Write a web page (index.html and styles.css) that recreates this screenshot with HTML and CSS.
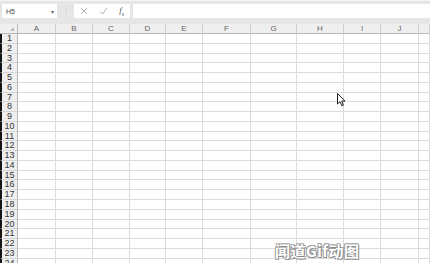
FILE: index.html
```html
<!DOCTYPE html>
<html lang="zh">
<head>
  <meta charset="UTF-8">
  <title>工作表</title>
  <link rel="stylesheet" href="styles.css">
</head>
<body>
  <div class="app">
    <!-- 编辑栏 -->
    <div class="formula-bar">
      <div class="name-box">
        <span>H5</span>
        <span class="caret">▾</span>
      </div>
      <div class="grip">⋮</div>
      <div class="fx-buttons">
        <svg width="8" height="8" viewBox="0 0 8 8"><path d="M1 1L7 7M7 1L1 7" stroke="#b0b0b0" stroke-width="1" fill="none"/></svg>
        <svg width="9" height="8" viewBox="0 0 9 8"><path d="M1 4.5L3.5 7L8 1" stroke="#b0b0b0" stroke-width="1" fill="none"/></svg>
        <span class="fx"><i>f</i><sub>x</sub></span>
      </div>
      <div class="formula-input"></div>
    </div>

    <!-- 表格 -->
    <div class="sheet" id="sheet"></div>

    <svg class="cursor" width="9" height="14" viewBox="0 0 9 14">
      <path d="M0.5 0.5L0.5 11L3 8.6L4.8 12.8L6.4 12.1L4.7 8.1L8 8.1Z" fill="#fff" stroke="#222" stroke-width="1" stroke-linejoin="round"/>
    </svg>

    <div class="watermark">闻道Gif动图</div>
  </div>

  <script>
    const cols = ['', 'A', 'B', 'C', 'D', 'E', 'F', 'G', 'H', 'I', 'J', ''];
    const sheet = document.getElementById('sheet');

    cols.forEach((c, i) => {
      const div = document.createElement('div');
      div.className = i === 0 ? 'corner' : 'col-head';
      div.textContent = c;
      sheet.appendChild(div);
    });

    for (let r = 1; r <= 24; r++) {
      cols.forEach((c, i) => {
        const div = document.createElement('div');
        if (i === 0) {
          div.className = 'row-head';
          div.textContent = r;
        } else {
          div.className = 'cell';
        }
        sheet.appendChild(div);
      });
    }
  </script>
</body>
</html>
```

FILE: styles.css
```css
body {
  margin: 0;
  font-family: "Liberation Sans", "Noto Sans CJK SC", sans-serif;
  background: #e6e6e6;
  color: #333;
}
.app {
  position: relative;
  width: 430px;
  height: 263px;
  overflow: hidden;
  border-top: 1px solid #f4f4f4;
  box-sizing: border-box;
}

/* 编辑栏 */
.formula-bar {
  display: flex;
  height: 14px;
  margin: 3px 0 6px;
}
.name-box {
  width: 55px;
  margin-left: 2px;
  background: #fff;
  display: flex;
  align-items: center;
  justify-content: space-between;
  padding: 0 3px 0 4px;
  box-sizing: border-box;
  font-size: 7px;
  color: #444;
}
.name-box .caret {
  font-size: 6px;
  color: #666;
}
.grip {
  width: 17px;
  text-align: center;
  font-size: 8px;
  line-height: 14px;
  color: #c4c4c4;
}
.fx-buttons {
  width: 56px;
  background: #fff;
  display: flex;
  align-items: center;
  justify-content: space-around;
}
.fx {
  font-family: "Liberation Serif", serif;
  font-size: 9px;
  color: #555;
  line-height: 1;
}
.fx sub {
  font-family: "Liberation Sans", sans-serif;
  font-size: 5px;
}
.formula-input {
  flex: 1;
  margin-left: 3px;
  background: #fff;
}

/* 表格 */
.sheet {
  display: grid;
  grid-template-columns: 18px 38px 37px 37px 36px 37px 48px 46px 47px 37px 38px 1fr;
  grid-template-rows: 10px repeat(24, 9.77px);
  background: #fff;
}
.corner,
.col-head {
  background: #efefef;
  border-right: 1px solid #cfcfcf;
  border-bottom: 1px solid #b9b9b9;
  box-sizing: border-box;
  font-size: 8px;
  line-height: 9px;
  text-align: center;
  color: #666;
}
.corner {
  position: relative;
  border-right-color: #b9b9b9;
}
.corner::after {
  content: "";
  position: absolute;
  right: 3px;
  bottom: 2px;
  border-left: 4px solid transparent;
  border-bottom: 4px solid #b8b8b8;
}
.row-head {
  background: #efefef;
  border-left: 2px solid #151515;
  border-right: 1px solid #b9b9b9;
  border-bottom: 1px solid #d6d6d6;
  box-sizing: border-box;
  font-size: 9px;
  line-height: 9px;
  text-align: center;
  color: #333;
}
.cell {
  border-right: 1px solid #dcdcdc;
  border-bottom: 1px solid #dcdcdc;
  box-sizing: border-box;
}

/* 叠加内容 */
.cursor {
  position: absolute;
  left: 337px;
  top: 92px;
}
.watermark {
  position: absolute;
  left: 275px;
  top: 241px;
  font-family: "Noto Sans CJK SC", sans-serif;
  font-weight: bold;
  font-size: 15px;
  line-height: 18px;
  letter-spacing: 0.5px;
  color: #fff;
  text-shadow: 1px 1px 0 #8a8a8a, -1px -1px 0 #a0a0a0, 1px -1px 0 #a0a0a0, -1px 1px 0 #a0a0a0;
}
```
